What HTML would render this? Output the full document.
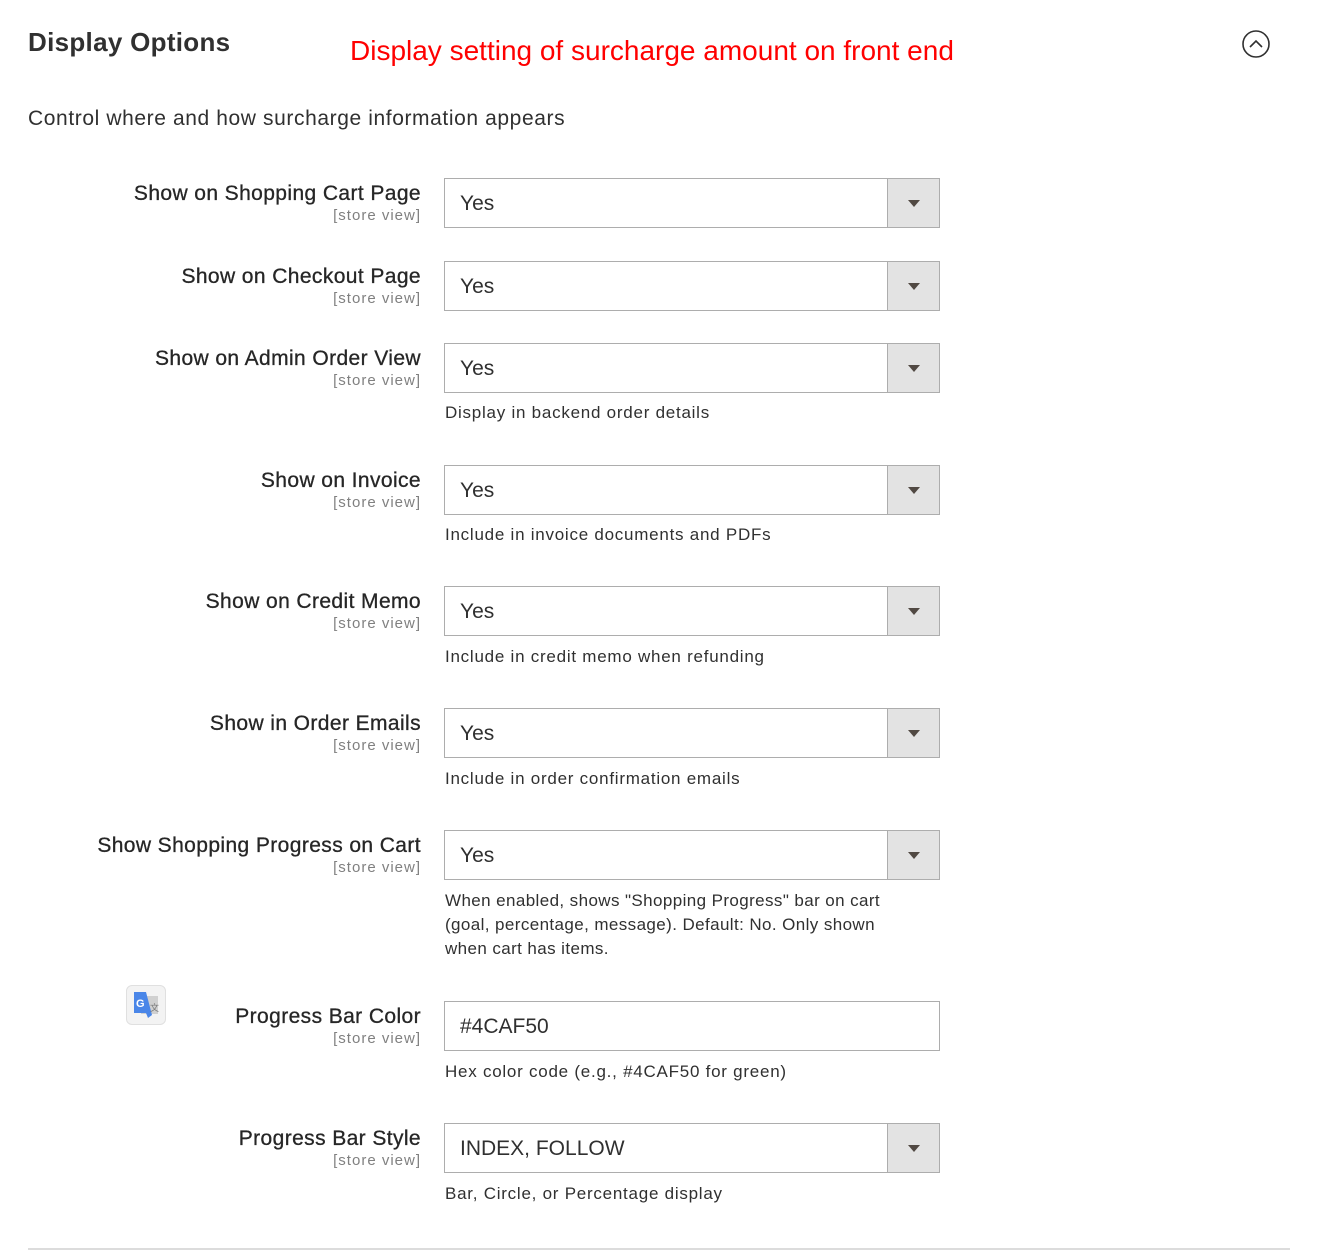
<!DOCTYPE html>
<html><head><meta charset="utf-8"><style>
body{margin:0;width:1335px;height:1259px;background:#fff;font-family:"Liberation Sans",sans-serif;color:#303030;position:relative;overflow:hidden}
.a{position:absolute}
.lbl{position:absolute;right:914px;text-align:right;white-space:nowrap}
.lbl b{display:block;font-weight:normal;font-size:21px;line-height:26px;color:#262626;letter-spacing:0.4px;-webkit-text-stroke:0.3px #262626}
.lbl i{display:block;font-style:normal;font-size:15px;line-height:18px;color:#808080;letter-spacing:1px}
.sel{position:absolute;left:444px;width:494px;height:48px;border:1px solid #adadad;background:#fff}
.sel span{position:absolute;left:15px;top:1px;line-height:48px;font-size:21px;color:#303030}
.sel .btn{position:absolute;right:0;top:0;width:51px;height:48px;background:#e3e3e3;border-left:1px solid #adadad}
.sel .btn:after{content:"";position:absolute;left:20px;top:21px;border-left:6px solid transparent;border-right:6px solid transparent;border-top:7px solid #514943}
.note{position:absolute;left:445px;width:520px;font-size:17px;line-height:24px;color:#303030;letter-spacing:0.75px;white-space:nowrap}
</style></head><body>
<div class="a" style="left:28px;top:27px;font-size:26px;font-weight:bold;color:#303030;letter-spacing:0.3px">Display Options</div>
<div class="a" style="left:350px;top:35px;font-size:28px;color:#ff0000">Display setting of surcharge amount on front end</div>
<svg class="a" style="left:1241px;top:29px" width="30" height="30" viewBox="0 0 30 30"><circle cx="15" cy="15" r="13" fill="none" stroke="#303030" stroke-width="1.6"/><path d="M9 18 L15 12 L21 18" fill="none" stroke="#303030" stroke-width="1.6"/></svg>
<div class="a" style="left:28px;top:107px;font-size:21px;color:#303030;letter-spacing:0.6px">Control where and how surcharge information appears</div>

<div class="lbl" style="top:181px"><b>Show on Shopping Cart Page</b><i>[store view]</i></div>
<div class="sel" style="top:178px"><span>Yes</span><div class="btn"></div></div>

<div class="lbl" style="top:264px"><b>Show on Checkout Page</b><i>[store view]</i></div>
<div class="sel" style="top:261px"><span>Yes</span><div class="btn"></div></div>

<div class="lbl" style="top:346px"><b>Show on Admin Order View</b><i>[store view]</i></div>
<div class="sel" style="top:343px"><span>Yes</span><div class="btn"></div></div>
<div class="note" style="top:401px">Display in backend order details</div>

<div class="lbl" style="top:468px"><b>Show on Invoice</b><i>[store view]</i></div>
<div class="sel" style="top:465px"><span>Yes</span><div class="btn"></div></div>
<div class="note" style="top:523px">Include in invoice documents and PDFs</div>

<div class="lbl" style="top:589px"><b>Show on Credit Memo</b><i>[store view]</i></div>
<div class="sel" style="top:586px"><span>Yes</span><div class="btn"></div></div>
<div class="note" style="top:645px">Include in credit memo when refunding</div>

<div class="lbl" style="top:711px"><b>Show in Order Emails</b><i>[store view]</i></div>
<div class="sel" style="top:708px"><span>Yes</span><div class="btn"></div></div>
<div class="note" style="top:767px">Include in order confirmation emails</div>

<div class="lbl" style="top:833px"><b>Show Shopping Progress on Cart</b><i>[store view]</i></div>
<div class="sel" style="top:830px"><span>Yes</span><div class="btn"></div></div>
<div class="note" style="top:889px;letter-spacing:0.4px">When enabled, shows "Shopping Progress" bar on cart<br>(goal, percentage, message). Default: No. Only shown<br>when cart has items.</div>

<div class="a" style="left:126px;top:985px;width:38px;height:38px;border:1px solid #e0e0e0;border-radius:6px;background:#f3f3f3"></div>
<svg class="a" style="left:131px;top:990px" width="30" height="30" viewBox="0 0 30 30"><rect x="10" y="6" width="17" height="18" fill="#d0d0d0"/><path d="M3 2 H15 L21 25 L17 28 L15 23 H3 Z" fill="#4a86e8"/><text x="5" y="17" font-size="11" font-weight="bold" fill="#fff" font-family="Liberation Sans,sans-serif">G</text><text x="19" y="21" font-size="9" fill="#777" font-family="DejaVu Sans,sans-serif">文</text></svg>

<div class="lbl" style="top:1004px"><b>Progress Bar Color</b><i>[store view]</i></div>
<div class="sel" style="top:1001px"><span>#4CAF50</span></div>
<div class="note" style="top:1060px">Hex color code (e.g., #4CAF50 for green)</div>

<div class="lbl" style="top:1126px"><b>Progress Bar Style</b><i>[store view]</i></div>
<div class="sel" style="top:1123px"><span>INDEX, FOLLOW</span><div class="btn"></div></div>
<div class="note" style="top:1182px">Bar, Circle, or Percentage display</div>

<div class="a" style="left:28px;top:1248px;width:1262px;height:2px;background:#dcdcdc"></div>
</body></html>
